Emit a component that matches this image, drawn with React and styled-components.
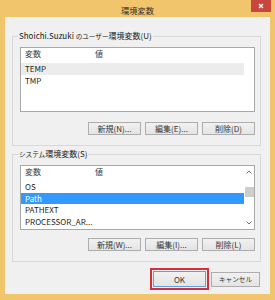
import styled, { createGlobalStyle } from "styled-components";

const FONT = `"Noto Sans CJK JP", "Noto Sans", sans-serif`;

const GlobalStyle = createGlobalStyle`
  html, body {
    margin: 0;
    padding: 0;
  }
  body {
    width: 275px;
    height: 300px;
    overflow: hidden;
    background: #f0c56b;
  }
`;

const userVars = [{ name: "TEMP", sel: "inactive" }, { name: "TMP" }];
const systemVars = [
  { name: "OS" },
  { name: "Path", sel: "active" },
  { name: "PATHEXT" },
  { name: "PROCESSOR_AR..." },
];

const Chevron = ({ up }) => (
  <svg width="6" height="4" viewBox="0 0 6 4">
    <path
      d={up ? "M0.5 3.5 L3 1 L5.5 3.5" : "M0.5 0.5 L3 3 L5.5 0.5"}
      fill="none"
      stroke="#707070"
      strokeWidth="1"
    />
  </svg>
);

const VarList = ({ rows, scroll }) => (
  <ListBox>
    <Rows>
      <Header>
        <NameCell>変数</NameCell>
        <span>値</span>
      </Header>
      {rows.map((r) => (
        <Row key={r.name} $sel={r.sel}>
          <NameCell>{r.name}</NameCell>
        </Row>
      ))}
    </Rows>
    <ScrollBar>
      {scroll && (
        <>
          <ArrowBox>
            <Chevron up />
          </ArrowBox>
          <Track>
            <Thumb />
          </Track>
          <ArrowBox>
            <Chevron />
          </ArrowBox>
        </>
      )}
    </ScrollBar>
  </ListBox>
);

export default function App() {
  return (
    <Window>
      <GlobalStyle />
      <TitleBar>
        <span />
        <Title>環境変数</Title>
        <Close>
          <svg width="6" height="6" viewBox="0 0 6 6">
            <path d="M1 1 L5 5 M5 1 L1 5" stroke="#fff" strokeWidth="1.3" />
          </svg>
        </Close>
      </TitleBar>
      <Client>
        <Group>
          <Legend>
            Shoichi.Suzuki <Kana>のユーザー</Kana>環境変数(U)
          </Legend>
          <VarList rows={userVars} />
          <ButtonRow $top={10}>
            <Button>新規(N)...</Button>
            <Button>編集(E)...</Button>
            <Button>削除(D)</Button>
          </ButtonRow>
        </Group>
        <Group $top={3}>
          <Legend>
            <Kana>システム</Kana>環境変数(S)
          </Legend>
          <VarList rows={systemVars} scroll />
          <ButtonRow $top={8}>
            <Button>新規(W)...</Button>
            <Button>編集(I)...</Button>
            <Button>削除(L)</Button>
          </ButtonRow>
        </Group>
        <Footer>
          <Marked>
            <Button $w={53} $h={16} $default>
              OK
            </Button>
          </Marked>
          <Button $w={49} $h={15}>
            <Kana>キャンセル</Kana>
          </Button>
        </Footer>
      </Client>
    </Window>
  );
}

const Window = styled.div`
  width: 275px;
  height: 300px;
  box-sizing: border-box;
  background: #f0c56b;
  padding: 0 5px 6px;
  display: flex;
  flex-direction: column;
  font-family: ${FONT};
`;
const TitleBar = styled.div`
  height: 17px;
  margin: 0 -5px;
  display: grid;
  grid-template-columns: 1fr auto 1fr;
  align-items: start;
`;
const Title = styled.span`
  padding-top: 2px;
  line-height: 16px;
  font-size: 8.3px;
  color: #333;
`;
const Close = styled.div`
  justify-self: end;
  margin-right: 4px;
  width: 20px;
  height: 12px;
  background: #c8463e;
  display: flex;
  align-items: center;
  justify-content: center;
`;
const Client = styled.div`
  flex: 1;
  background: #f0f0f0;
  padding: 14px 9px 4px 7px;
  display: flex;
  flex-direction: column;
`;
const Group = styled.fieldset`
  margin: ${(p) => p.$top || 0}px 0 0;
  padding: 6px 5px 10px 7px;
  border: 1px solid #d8d8d8;
  min-width: 0;
`;
const Legend = styled.legend`
  margin-left: -2px;
  padding: 0 1px;
  font-size: 8px;
  line-height: 10px;
  color: #222;
  white-space: nowrap;
`;
const Kana = styled.span`
  font-size: 6.6px;
`;
const ListBox = styled.div`
  height: 65px;
  box-sizing: border-box;
  border: 1px solid #a8a8a8;
  background: #fff;
  display: flex;
`;
const Rows = styled.div`
  flex: 1;
  display: flex;
  flex-direction: column;
`;
const Header = styled.div`
  height: 15px;
  line-height: 11px;
  padding-left: 4px;
  display: flex;
  font-size: 8px;
  color: #3a3a3a;
`;
const NameCell = styled.span`
  width: 70px;
  flex: none;
  white-space: nowrap;
`;
const Row = styled.div`
  height: 11.5px;
  line-height: 11.5px;
  padding-left: 4px;
  display: flex;
  font-size: 8px;
  color: ${(p) => (p.$sel === "active" ? "#fff" : "#1e1e1e")};
  background: ${(p) =>
    p.$sel === "active" ? "#3399ff" : p.$sel === "inactive" ? "#ececec" : "transparent"};
`;
const ScrollBar = styled.div`
  width: 10px;
  flex: none;
  display: flex;
  flex-direction: column;
`;
const ArrowBox = styled.div`
  height: 12px;
  display: flex;
  align-items: center;
  justify-content: center;
`;
const Track = styled.div`
  flex: 1;
`;
const Thumb = styled.div`
  margin: 9px 0 0 1px;
  height: 10px;
  background: #cdcdcd;
`;
const ButtonRow = styled.div`
  margin-top: ${(p) => p.$top}px;
  display: flex;
  justify-content: flex-end;
  gap: 4px;
`;
const Button = styled.div`
  width: ${(p) => p.$w || 53}px;
  height: ${(p) => p.$h || 13}px;
  box-sizing: border-box;
  border: 1px solid ${(p) => (p.$default ? "#5fa2e2" : "#adadad")};
  background: linear-gradient(#f1f1f1, #e4e4e4);
  font-size: 8px;
  color: #333;
  display: flex;
  align-items: center;
  justify-content: center;
  white-space: nowrap;
`;
const Footer = styled.div`
  margin-top: 6px;
  padding-right: 1px;
  display: flex;
  justify-content: flex-end;
  align-items: center;
  gap: 2px;
`;
const Marked = styled.div`
  border: 2px solid #d3303a;
  padding: 1px;
`;
